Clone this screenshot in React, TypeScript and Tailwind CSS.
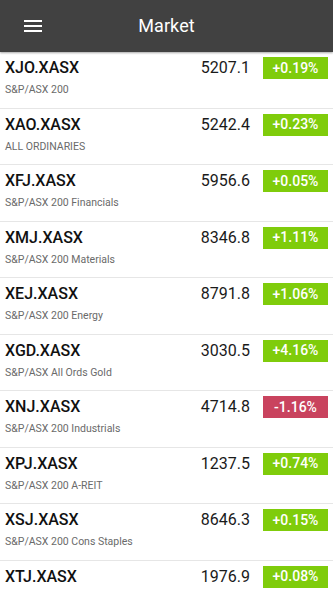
import React from "react";

type Row = { sym: string; name: string; price: string; chg: string };

const rows: Row[] = [
  { sym: "XJO.XASX", name: "S&P/ASX 200", price: "5207.1", chg: "+0.19%" },
  { sym: "XAO.XASX", name: "ALL ORDINARIES", price: "5242.4", chg: "+0.23%" },
  { sym: "XFJ.XASX", name: "S&P/ASX 200 Financials", price: "5956.6", chg: "+0.05%" },
  { sym: "XMJ.XASX", name: "S&P/ASX 200 Materials", price: "8346.8", chg: "+1.11%" },
  { sym: "XEJ.XASX", name: "S&P/ASX 200 Energy", price: "8791.8", chg: "+1.06%" },
  { sym: "XGD.XASX", name: "S&P/ASX All Ords Gold", price: "3030.5", chg: "+4.16%" },
  { sym: "XNJ.XASX", name: "S&P/ASX 200 Industrials", price: "4714.8", chg: "-1.16%" },
  { sym: "XPJ.XASX", name: "S&P/ASX 200 A-REIT", price: "1237.5", chg: "+0.74%" },
  { sym: "XSJ.XASX", name: "S&P/ASX 200 Cons Staples", price: "8646.3", chg: "+0.15%" },
  { sym: "XTJ.XASX", name: "S&P/ASX 200 Telecom", price: "1976.9", chg: "+0.08%" },
];

export default function App() {
  return (
    <div
      className="w-[333px] h-[592px] overflow-hidden bg-white"
      style={{ fontFamily: "Roboto, 'Noto Sans', sans-serif" }}
    >
      <header className="relative z-10 h-[52px] bg-[#414141] flex items-center justify-center shadow-[0_1px_2px_rgba(0,0,0,0.35)]">
        <svg
          className="absolute left-[21px] top-[14px]"
          width="24"
          height="24"
          viewBox="0 0 24 24"
          fill="#ffffff"
        >
          <path d="M3 18h18v-2H3v2zm0-5h18v-2H3v2zm0-7v2h18V6H3z" />
        </svg>
        <span className="text-white text-[18px] leading-none tracking-[0.1px]">Market</span>
      </header>
      <div>
        {rows.map((r) => {
          const neg = r.chg.startsWith("-");
          return (
            <div
              key={r.sym}
              className="h-[56.5px] border-b border-[#e6e6e6] flex justify-between pl-[5px] pr-[5px]"
            >
              <div className="pt-[6px] flex flex-col min-w-0">
                <span className="text-[16px] leading-[20px] font-medium text-[#111111]">
                  {r.sym}
                </span>
                <span className="mt-[5px] text-[10.5px] leading-[14px] text-[#6a6a6a] whitespace-nowrap">
                  {r.name}
                </span>
              </div>
              <div className="flex shrink-0 items-start gap-[13px]">
                <span className="pt-[6px] text-[16px] leading-[20px] text-[#1a1a1a]">
                  {r.price}
                </span>
                <span
                  className={
                    "mt-[5px] w-[65px] h-[22px] flex items-center justify-center text-white text-[14px] font-medium " +
                    (neg ? "bg-[#c9435e]" : "bg-[#7fcc0b]")
                  }
                >
                  {r.chg}
                </span>
              </div>
            </div>
          );
        })}
      </div>
    </div>
  );
}
